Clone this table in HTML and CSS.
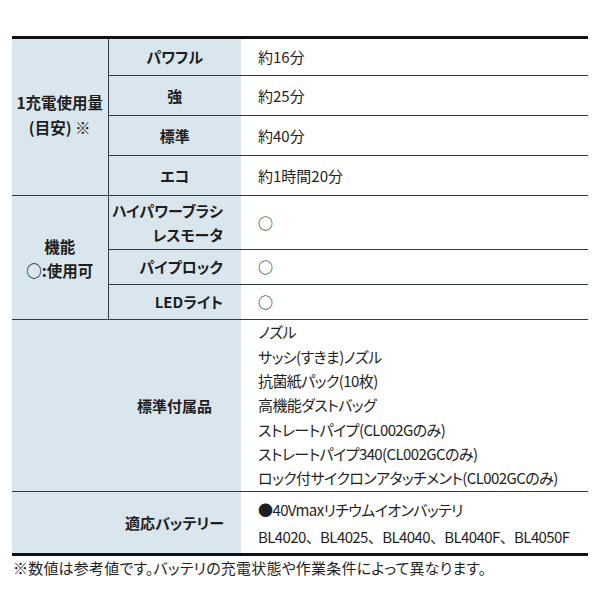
FILE: index.html
```html
<!DOCTYPE html>
<html lang="ja">
<head>
<meta charset="utf-8">
<title>仕様</title>
<link rel="stylesheet" href="styles.css">
</head>
<body>
<table class="spec">
  <colgroup>
    <col class="c1">
    <col class="c2">
    <col class="c3">
  </colgroup>
  <tbody>
    <tr class="h38">
      <th class="grp" rowspan="4">1充電使用量<br>(目安) <span class="light">※</span></th>
      <th class="sub">パワフル</th>
      <td class="val">約16分</td>
    </tr>
    <tr class="h40">
      <th class="sub">強</th>
      <td class="val">約25分</td>
    </tr>
    <tr class="h40">
      <th class="sub">標準</th>
      <td class="val">約40分</td>
    </tr>
    <tr class="h40">
      <th class="sub">エコ</th>
      <td class="val">約1時間20分</td>
    </tr>
    <tr class="h54">
      <th class="grp grp2" rowspan="3">機能<br>○:使用可</th>
      <th class="sub r">ハイパワーブラシ<br>レスモータ</th>
      <td class="val">○</td>
    </tr>
    <tr class="h35">
      <th class="sub r">パイプロック</th>
      <td class="val">○</td>
    </tr>
    <tr class="h35">
      <th class="sub r">LEDライト</th>
      <td class="val">○</td>
    </tr>
    <tr class="h172">
      <th class="blank"></th>
      <th class="sub">標準付属品</th>
      <td class="val list">ノズル<br>サッシ(すきま)ノズル<br>抗菌紙パック(10枚)<br>高機能ダストバッグ<br>ストレートパイプ(CL002Gのみ)<br>ストレートパイプ340(CL002GCのみ)<br>ロック付サイクロンアタッチメント(CL002GCのみ)</td>
    </tr>
    <tr class="h63">
      <th class="blank"></th>
      <th class="sub">適応バッテリー</th>
      <td class="val batt">●40Vmaxリチウムイオンバッテリ<br><span class="models">BL4020、BL4025、BL4040、BL4040F、BL4050F</span></td>
    </tr>
  </tbody>
</table>
<p class="note">※数値は参考値です。バッテリの充電状態や作業条件によって異なります。</p>
</body>
</html>
```
FILE: styles.css
```css
html, body {
  margin: 0;
  padding: 0;
  background: #ffffff;
}
body {
  font-family: "Noto Sans CJK JP", "Noto Sans", sans-serif;
  color: #1e1e1e;
  font-size: 15px;
  font-feature-settings: "palt";
}
.spec {
  margin: 36px 0 0 12px;
  width: 576px;
  table-layout: fixed;
  border-collapse: collapse;
  border-top: 3px solid #111;
  border-bottom: 3px solid #111;
}
.c1 { width: 96px; }
.c2 { width: 133px; }
.c3 { width: 347px; }

.spec th, .spec td {
  padding: 0;
  border-bottom: 1px solid #2f3a40;
  vertical-align: middle;
  line-height: 24px;
}
.spec tr:last-child th, .spec tr:last-child td {
  border-bottom: none;
}
.spec th {
  background: #dae6ee;
  font-weight: 700;
  text-align: center;
}
.spec .grp {
  border-right: 1px solid #2f3a40;
  line-height: 25px;
  padding-bottom: 4px;
  font-size: 15.5px;
}
.spec .grp2 {
  line-height: 24px;
  padding-bottom: 0;
}
.light { font-weight: 400; }
.spec .sub.r {
  text-align: right;
  padding-right: 18px;
}
.spec .val {
  padding-left: 17px;
  font-weight: 400;
  text-align: left;
}
.spec .list {
  line-height: 24.3px;
  letter-spacing: -0.6px;
}
.spec .batt {
  line-height: 27px;
  letter-spacing: -0.6px;
}
.models {
  font-feature-settings: normal;
}

.h38 { height: 38px; }
.h40 { height: 40px; }
.h54 { height: 54px; }
.h35 { height: 35px; }
.h172 { height: 172px; }
.h63 { height: 63px; }

.note {
  margin: 1px 0 0 13px;
  line-height: 22px;
  font-size: 15px;
  letter-spacing: 0.2px;
}
```
